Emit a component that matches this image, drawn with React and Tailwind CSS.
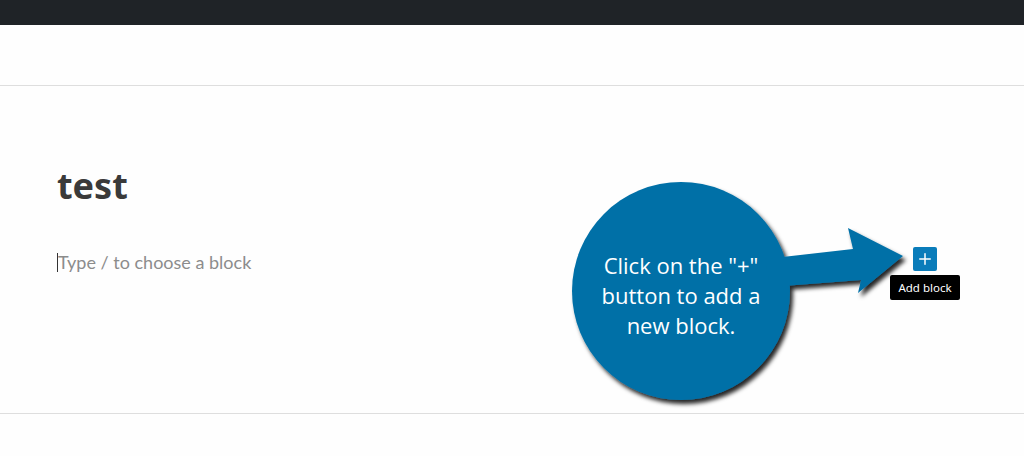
import { Plus } from 'lucide-react'

const Callout = () => (
  <div className="absolute left-[560px] top-[170px] w-[360px] h-[250px]">
    <svg width="360" height="250" viewBox="0 0 360 250" className="absolute inset-0">
      <defs>
        <filter id="sh" x="-20%" y="-20%" width="140%" height="140%">
          <feDropShadow dx="3" dy="4" stdDeviation="2.2" floodColor="#000" floodOpacity="0.85" />
        </filter>
      </defs>
      <g filter="url(#sh)" fill="#0270a7">
        <circle cx="121" cy="121" r="109" />
        <polygon points="205,89 293,79 288,58 343,86 298,123 301,110 210,117" />
      </g>
    </svg>
    {/* text inside the bubble */}
    <div className="absolute left-[12px] top-[80px] w-[218px] text-center text-white text-[22px] leading-[30px] font-['Open_Sans',sans-serif]">
      Click on the "+"<br />button to add a<br />new block.
    </div>
  </div>
)

export default function App() {
  return (
    <div className="relative w-[1024px] h-[456px] bg-[#fefefe] overflow-hidden font-['Noto_Sans',sans-serif]">
      {/* Admin bar */}
      <div className="h-[25px] bg-[#1f2327]" />

      {/* Editor header */}
      <div className="h-[61px] border-b border-[#dedede]" />

      {/* Content */}
      <div className="h-[328px] border-b border-[#dedede] pl-[57px] pt-[76px]">
        <h1 className="text-[36px] leading-[48px] font-bold text-[#3a3a3a]">test</h1>
        <div className="mt-[40px] flex items-center">
          <span className="w-px h-[19px] bg-[#333]" />
          <span className="text-[18px] leading-[24px] text-[#8c8c8c] font-['Lato',sans-serif]">Type / to choose a block</span>
        </div>
      </div>

      <Callout />

      {/* Block inserter with tooltip */}
      <div className="absolute left-[890px] top-[247px] w-[70px] flex flex-col items-center gap-[4px]">
        <div className="w-[24px] h-[24px] rounded-[2px] bg-[#0a7cba] flex items-center justify-center">
          <Plus className="w-[18px] h-[18px] text-white" strokeWidth={2} />
        </div>
        <div className="w-[70px] h-[25px] rounded-[2px] bg-black text-white text-[11.5px] leading-[25px] text-center">
          Add block
        </div>
      </div>
    </div>
  )
}
